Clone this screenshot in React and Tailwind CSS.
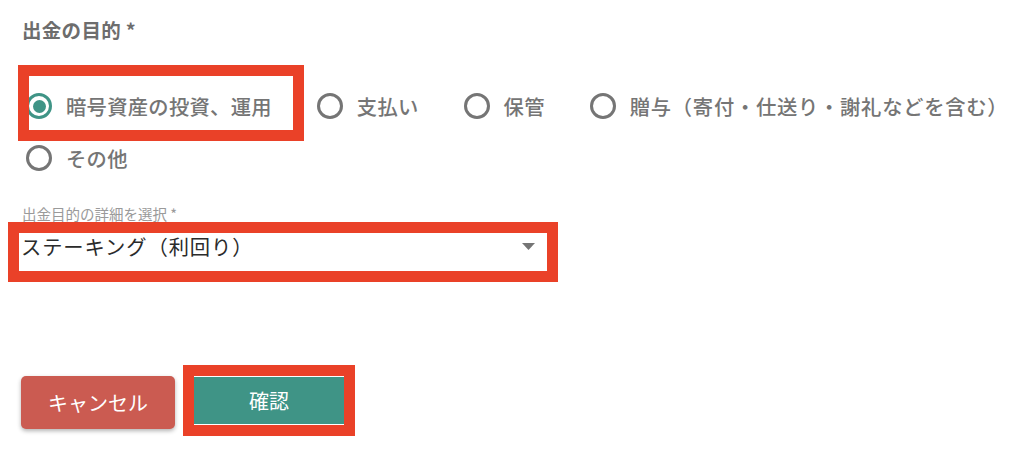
import React from "react";

const options = [
  { label: "暗号資産の投資、運用", checked: true, boxed: true, track: "tracking-[0.3px]" },
  { label: "支払い", track: "tracking-[0.3px]" },
  { label: "保管", track: "tracking-[0.3px]" },
  { label: "贈与（寄付・仕送り・謝礼などを含む）", track: "tracking-[0.75px]" },
  { label: "その他", track: "tracking-[0.3px]" },
];

function Radio({ checked }) {
  return checked ? (
    <span className="w-[26px] h-[26px] shrink-0 rounded-full border-[3px] border-[#3f9486] flex items-center justify-center">
      <span className="w-[13px] h-[13px] rounded-full bg-[#3f9486]" />
    </span>
  ) : (
    <span className="w-[26px] h-[26px] shrink-0 rounded-full border-[3px] border-[#757575]" />
  );
}

export default function App() {
  return (
    <div className="w-[1024px] h-[453px] bg-white overflow-hidden font-['Noto_Sans_CJK_JP','Noto_Sans',sans-serif]">
      <div className="pl-[22px] pt-[17px] flex flex-col">
        <div className="text-[19.5px] leading-[26px] font-bold text-[#6d6d6d] tracking-[0.3px]">出金の目的 *</div>

        <div className="mt-[37px] ml-[4px] flex flex-wrap gap-x-[45px]">
          {options.map((o) => (
            <label key={o.label} className="relative h-[52px] flex items-center gap-[14px]">
              <Radio checked={o.checked} />
              <span className={"text-[20.3px] leading-none font-medium text-[#757575] whitespace-nowrap " + o.track}>{o.label}</span>
              {o.boxed && (
                <span className="absolute left-[-8px] top-[-15px] w-[286px] h-[76px] border-[11px] border-[#ea4128] pointer-events-none" />
              )}
            </label>
          ))}
        </div>

        <div className="mt-[21px] text-[14.5px] leading-[18px] text-[#9a9a9a]">出金目的の詳細を選択 *</div>

        <div className="relative -ml-[1px] mt-[3px] w-[524px] h-[40px] flex items-center justify-between pr-[10px]">
          <span className="text-[20.3px] leading-none text-[#2b2b2b] tracking-[0.9px]">ステーキング（利回り）</span>
          <svg width="13" height="7" viewBox="0 0 13 7" className="mt-[1px]">
            <path d="M0 0 L13 0 L6.5 7 Z" fill="#757575" />
          </svg>
          <span className="absolute left-[-13px] top-[-4px] w-[550px] h-[60px] border-[11px] border-[#ea4128] pointer-events-none" />
        </div>

        <div className="mt-[110px] -ml-[1px] flex items-start">
          <button className="w-[154px] h-[53px] rounded-[5px] bg-[#cb5b51] text-white text-[20px] shadow-[0_2px_4px_rgba(0,0,0,0.3)] flex items-center justify-center">
            キャンセル
          </button>
          <div className="relative ml-[19px] mt-[1px]">
            <button className="w-[150px] h-[47px] bg-[#3f9486] text-white text-[20px] flex items-center justify-center">
              確認
            </button>
            <span className="absolute left-[-11px] top-[-12px] w-[172px] h-[71px] border-[11px] border-[#ea4128] pointer-events-none" />
          </div>
        </div>
      </div>
    </div>
  );
}
